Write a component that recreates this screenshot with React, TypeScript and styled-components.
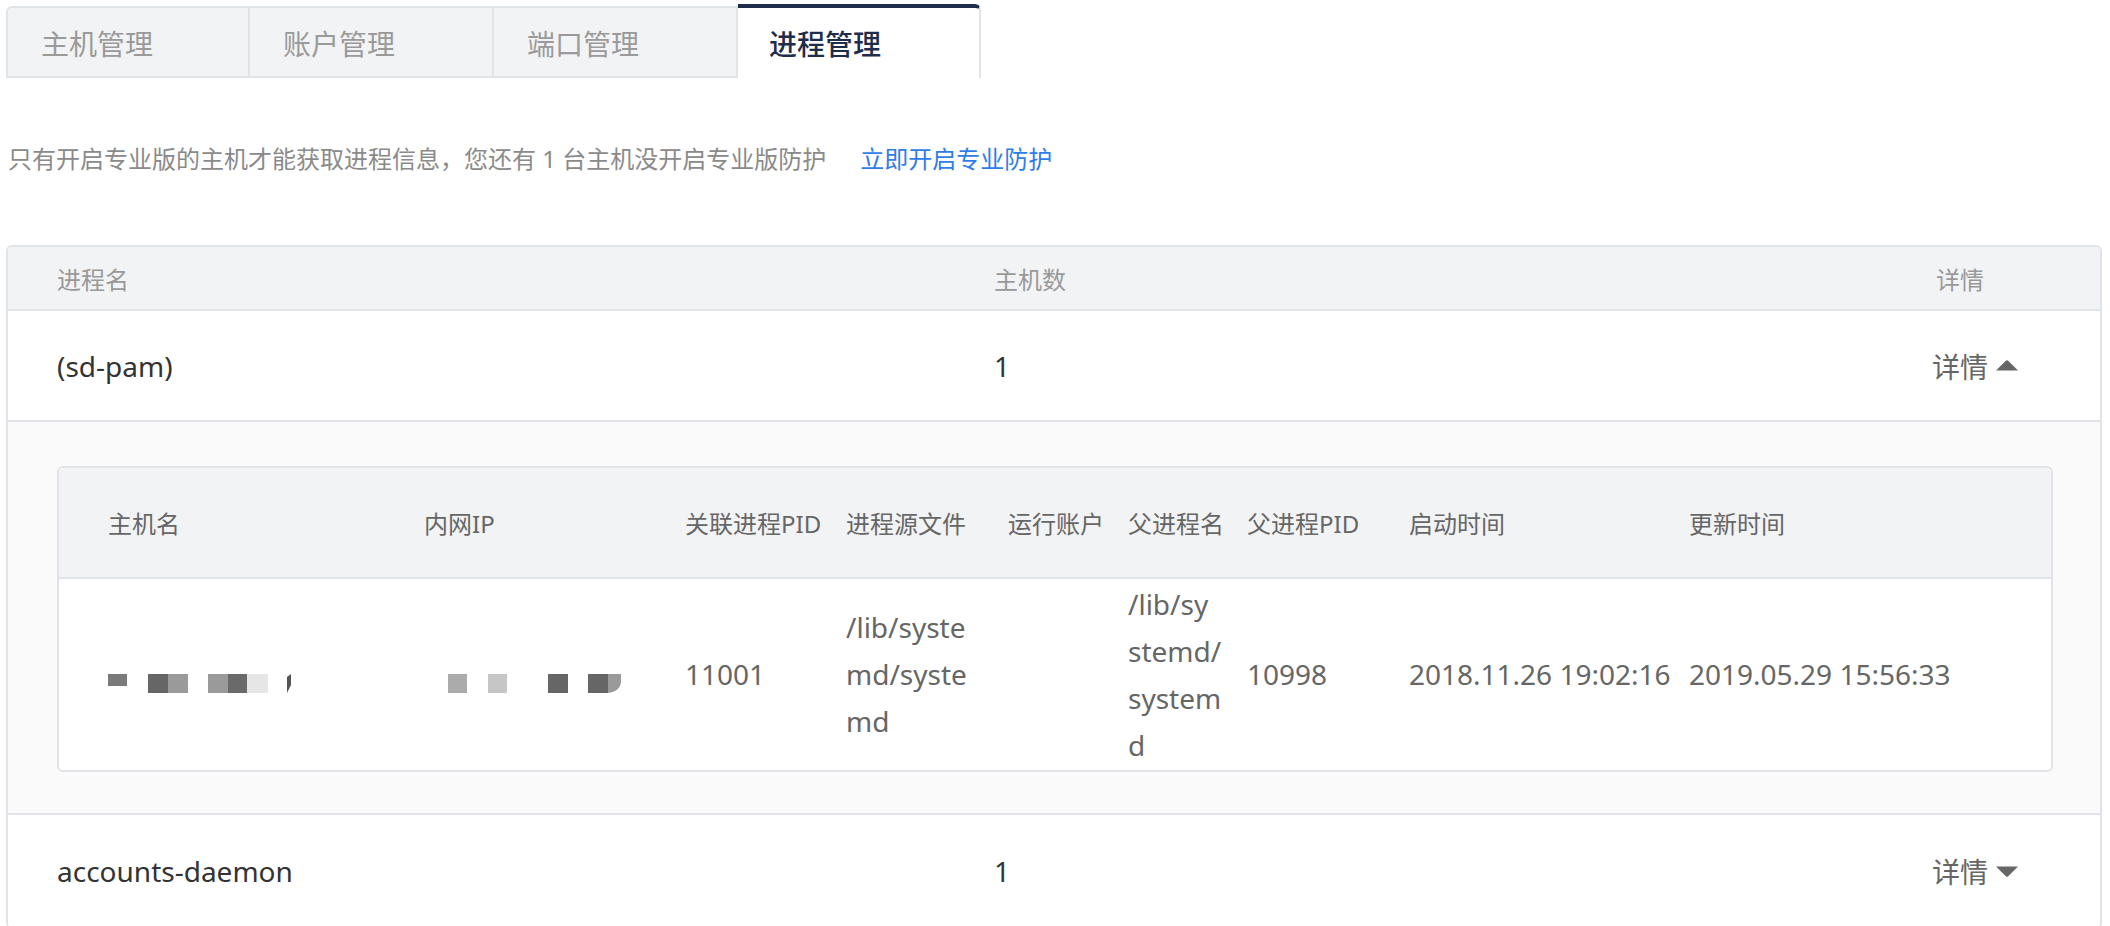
import React from 'react';
import styled, { createGlobalStyle } from 'styled-components';

const GlobalStyle = createGlobalStyle`
    html, body {
        margin: 0;
        padding: 0;
        background: #fff;
        overflow: hidden;
    }
    body {
        font-family: "Noto Sans", "Noto Sans CJK SC", sans-serif;
    }
    * {
        box-sizing: border-box;
    }
`;

const BORDER = '#e0e3e8';
const HEAD_BG = '#f2f3f5';

const tabs = ['主机管理', '账户管理', '端口管理', '进程管理'];

const detailColumns = [
    { title: '主机名', width: '365px', first: true },
    { title: '内网IP', width: '261px' },
    { title: '关联进程PID', width: '161px' },
    { title: '进程源文件', width: '162px' },
    { title: '运行账户', width: '120px' },
    { title: '父进程名', width: '119px' },
    { title: '父进程PID', width: '162px' },
    { title: '启动时间', width: '280px' },
    { title: '更新时间', width: '1fr' },
];

const processes = [
    { name: '(sd-pam)', hosts: 1, expanded: true },
    { name: 'accounts-daemon', hosts: 1, expanded: false },
];

// mosaic blocks that hide host name / ip in the screenshot
const HostMosaic = () => (
    <svg width="200" height="40" viewBox="0 0 200 40">
        <rect x="0" y="19" width="19" height="12" fill="#7a7a7a" />
        <rect x="40" y="19" width="20" height="19" fill="#666" />
        <rect x="60" y="19" width="20" height="19" fill="#9a9a9a" />
        <rect x="100" y="19" width="20" height="19" fill="#9a9a9a" />
        <rect x="120" y="19" width="19" height="19" fill="#6a6a6a" />
        <rect x="139" y="19" width="21" height="19" fill="#e6e6e6" />
        <path d="M179 22 L183 19 L183 30 L179 38 Z" fill="#555" />
    </svg>
);

const IpMosaic = () => (
    <svg width="200" height="40" viewBox="0 0 200 40">
        <rect x="24" y="19" width="19" height="19" fill="#ababab" />
        <rect x="64" y="19" width="19" height="19" fill="#c6c6c6" />
        <rect x="124" y="19" width="20" height="19" fill="#666" />
        <rect x="164" y="19" width="20" height="19" fill="#666" />
        <path d="M184 19 H197 V26 Q197 36 184 38 Z" fill="#9a9a9a" />
    </svg>
);

const Path: React.FC<{ parts: string[] }> = ({ parts }) => (
    <>
        {parts.map((p, i) => (
            <React.Fragment key={i}>
                {i > 0 && <wbr />}
                {p}
            </React.Fragment>
        ))}
    </>
);

const Caret: React.FC<{ up: boolean }> = ({ up }) => (
    <svg width="22" height="11" viewBox="0 0 22 11">
        {up ? (
            <path d="M0 10.5 L9.8 0.8 Q11 -0.2 12.2 0.8 L22 10.5 Z" fill="#666" />
        ) : (
            <path d="M0 0.5 L9.8 10.2 Q11 11.2 12.2 10.2 L22 0.5 Z" fill="#666" />
        )}
    </svg>
);

const App: React.FC = () => {
    const detailValues: React.ReactNode[] = [
        <HostMosaic key="h" />,
        <IpMosaic key="ip" />,
        '11001',
        <Path key="src" parts={['/lib/syste', 'md/syste', 'md']} />,
        '',
        <Path key="pp" parts={['/lib/sy', 'stemd/', 'system', 'd']} />,
        '10998',
        '2018.11.26 19:02:16',
        '2019.05.29 15:56:33',
    ];
    const template = detailColumns.map((c) => c.width).join(' ');

    return (
        <>
            <GlobalStyle />
            <Page>
                <TabBar>
                    {tabs.map((t, i) => (
                        <Tab key={t} active={i === 3} first={i === 0}>
                            {t}
                        </Tab>
                    ))}
                </TabBar>
                <Notice>
                    只有开启专业版的主机才能获取进程信息，您还有 1 台主机没开启专业版防护
                    <NoticeLink>立即开启专业防护</NoticeLink>
                </Notice>
                <Table>
                    <HeadRow>
                        <HeadCell>进程名</HeadCell>
                        <HeadCell>主机数</HeadCell>
                        <HeadCell indent>详情</HeadCell>
                    </HeadRow>
                    {processes.map((p) => (
                        <React.Fragment key={p.name}>
                            <BodyRow>
                                <BodyCell>{p.name}</BodyCell>
                                <BodyCell>{p.hosts}</BodyCell>
                                <Toggle>
                                    详情
                                    <Caret up={p.expanded} />
                                </Toggle>
                            </BodyRow>
                            {p.expanded && (
                                <Expanded>
                                    <DetailTable>
                                        <DetailHead template={template}>
                                            {detailColumns.map((c) => (
                                                <DetailHeadCell key={c.title} first={c.first}>
                                                    {c.title}
                                                </DetailHeadCell>
                                            ))}
                                        </DetailHead>
                                        <DetailRow template={template}>
                                            {detailValues.map((v, i) => (
                                                <DetailCell key={i} first={detailColumns[i].first}>
                                                    {v}
                                                </DetailCell>
                                            ))}
                                        </DetailRow>
                                    </DetailTable>
                                </Expanded>
                            )}
                        </React.Fragment>
                    ))}
                </Table>
            </Page>
        </>
    );
};

const Page = styled.div`
    padding: 4px 8px 0 6px;
`;

const TabBar = styled.div`
    display: flex;
    align-items: flex-end;
    height: 74px;
`;

const Tab = styled.div<{ active?: boolean; first?: boolean }>`
    width: ${(p) => (p.active ? '243px' : '244px')};
    height: ${(p) => (p.active ? '74px' : '72px')};
    display: flex;
    align-items: center;
    padding-left: ${(p) => (p.active ? '31px' : '33px')};
    padding-top: ${(p) => (p.active ? '0' : '2px')};
    font-size: 28px;
    font-weight: ${(p) => (p.active ? 500 : 400)};
    color: ${(p) => (p.active ? '#1f2d4d' : '#9a9a9a')};
    background: ${(p) => (p.active ? '#fff' : HEAD_BG)};
    border-top: ${(p) => (p.active ? '4px solid #1f2d4d' : `2px solid ${BORDER}`)};
    border-right: 2px solid ${BORDER};
    border-bottom: ${(p) => (p.active ? 'none' : `2px solid ${BORDER}`)};
    border-left: ${(p) => (p.first ? `2px solid ${BORDER}` : 'none')};
    border-radius: ${(p) => (p.first ? '6px 0 0 0' : p.active ? '0 6px 0 0' : '0')};
`;

const Notice = styled.div`
    margin-top: 64px;
    padding-left: 2px;
    height: 34px;
    line-height: 34px;
    font-size: 24px;
    color: #8a8a8a;
`;

const NoticeLink = styled.a`
    margin-left: 34px;
    color: #2e7de9;
    cursor: pointer;
`;

const Table = styled.div`
    margin-top: 69px;
    border: 2px solid ${BORDER};
    border-radius: 6px;
    overflow: hidden;
`;

const HeadRow = styled.div`
    display: grid;
    grid-template-columns: 937px 938px 1fr;
    align-items: center;
    height: 64px;
    padding-left: 49px;
    background: ${HEAD_BG};
    border-bottom: 2px solid ${BORDER};
`;

const HeadCell = styled.div<{ indent?: boolean }>`
    font-size: 24px;
    color: #999;
    padding-left: ${(p) => (p.indent ? '4px' : '0')};
`;

const BodyRow = styled.div`
    display: grid;
    grid-template-columns: 937px 938px 1fr;
    align-items: center;
    height: 111px;
    padding-left: 49px;
    background: #fff;
    border-bottom: 2px solid ${BORDER};
    &:last-child {
        height: 112px;
        border-bottom: none;
    }
`;

const BodyCell = styled.div`
    font-size: 28px;
    color: #333;
`;

const Toggle = styled.div`
    display: flex;
    align-items: center;
    gap: 8px;
    font-size: 28px;
    color: #666;
    cursor: pointer;
`;

const Expanded = styled.div`
    padding: 44px 47px 41px 49px;
    background: #fafafa;
    border-bottom: 2px solid ${BORDER};
`;

const DetailTable = styled.div`
    height: 306px;
    border: 2px solid ${BORDER};
    border-radius: 6px;
    background: #fff;
    overflow: hidden;
`;

const DetailHead = styled.div<{ template: string }>`
    display: grid;
    grid-template-columns: ${(p) => p.template};
    align-items: center;
    height: 111px;
    background: ${HEAD_BG};
    border-bottom: 2px solid ${BORDER};
`;

const DetailHeadCell = styled.div<{ first?: boolean }>`
    padding: 0 16px 0 ${(p) => (p.first ? '49px' : '0')};
    font-size: 24px;
    color: #666;
    white-space: nowrap;
`;

const DetailRow = styled.div<{ template: string }>`
    display: grid;
    grid-template-columns: ${(p) => p.template};
    align-items: center;
    height: 191px;
`;

const DetailCell = styled.div<{ first?: boolean }>`
    display: flex;
    align-items: center;
    padding: 0 16px 0 ${(p) => (p.first ? '49px' : '0')};
    font-size: 28px;
    line-height: 47px;
    color: #666;
    overflow-wrap: normal;
    word-break: normal;
`;

export default App;
